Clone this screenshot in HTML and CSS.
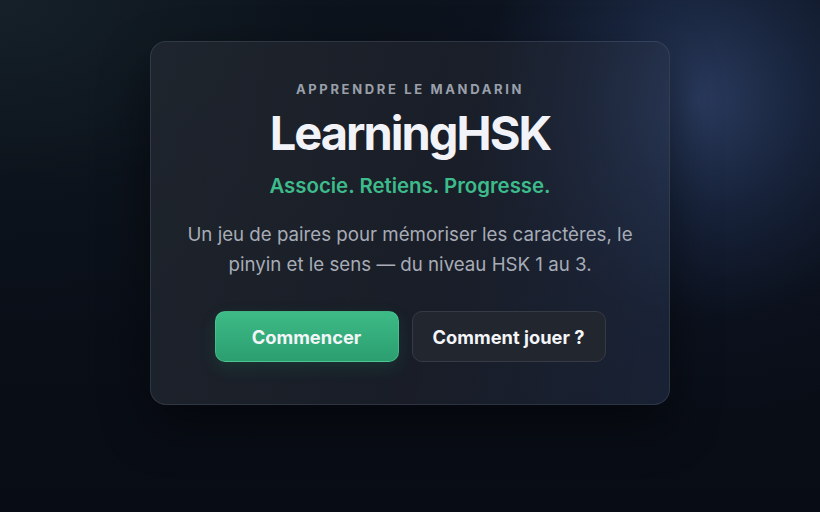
FILE: index.html
```html
<!DOCTYPE html>
<html lang="fr">
<head>
<meta charset="utf-8">
<title>LearningHSK</title>
<link rel="stylesheet" href="styles.css">
</head>
<body>
<main class="stage">
  <section class="card">
    <p class="eyebrow">APPRENDRE LE MANDARIN</p>
    <h1 class="title">LearningHSK</h1>
    <p class="tagline">Associe. Retiens. Progresse.</p>
    <p class="lead">Un jeu de paires pour mémoriser les caractères, le<br>pinyin et le sens — du niveau HSK 1 au 3.</p>
    <div class="actions">
      <button class="btn btn-primary">Commencer</button>
      <button class="btn btn-ghost">Comment jouer ?</button>
    </div>
  </section>
</main>
</body>
</html>
```

FILE: styles.css
```css
* { box-sizing: border-box; }
html, body { margin: 0; height: 100%; }
body {
  font-family: Inter, "Noto Sans", sans-serif;
  background-color: #090d16;
  background-image:
    radial-gradient(circle at 700px 100px, rgba(52,72,116,0.75) 0, rgba(36,54,92,0.5) 110px, rgba(20,30,55,0.18) 220px, rgba(10,14,24,0) 320px),
    radial-gradient(ellipse at 0 0, rgba(22,34,42,0.9) 0, rgba(14,22,30,0.5) 300px, rgba(9,13,22,0) 560px),
    linear-gradient(180deg, #0b111a 0%, #080c15 100%);
  overflow: hidden;
}
.stage {
  height: 100%;
  display: flex;
  justify-content: center;
  padding-top: 41px;
}
.card {
  width: 520px;
  height: 364px;
  border-radius: 16px;
  border: 1px solid rgba(120,130,150,0.22);
  background: linear-gradient(100deg, rgba(34,40,48,0.82) 0%, rgba(30,34,44,0.78) 55%, rgba(44,58,88,0.45) 100%);
  box-shadow: 0 20px 50px rgba(0,0,0,0.45);
  display: flex;
  flex-direction: column;
  align-items: center;
  text-align: center;
  padding-top: 38px;
}
.eyebrow {
  margin: 0;
  font-size: 13px;
  font-weight: 700;
  letter-spacing: 2.65px;
  color: #9aa0ab;
  line-height: 18px;
}
.title {
  margin: 6px 0 0;
  font-size: 47px;
  font-weight: 700;
  letter-spacing: -2px;
  color: #f1f3f8;
  line-height: 58px;
}
.tagline {
  margin: 10px 0 0;
  font-size: 20.4px;
  font-weight: 600;
  color: #3dbb8b;
  line-height: 28px;
}
.lead {
  margin: 20px 0 0;
  font-size: 18.7px;
  line-height: 30px;
  color: #a7acb7;
}
.actions {
  margin-top: 31px;
  display: flex;
  gap: 13px;
}
.btn {
  height: 51px;
  border-radius: 10px;
  font-family: inherit;
  font-size: 18.3px;
  font-weight: 700;
  color: #f3f5f8;
  cursor: pointer;
}
.btn-primary {
  width: 184px;
  border: 1px solid rgba(110,220,170,0.35);
  background: linear-gradient(180deg, #3dbb87 0%, #2b9e6f 100%);
  box-shadow: 0 6px 16px rgba(40,160,110,0.16);
}
.btn-ghost {
  width: 194px;
  border: 1px solid #353a45;
  background: #22262f;
}
```
